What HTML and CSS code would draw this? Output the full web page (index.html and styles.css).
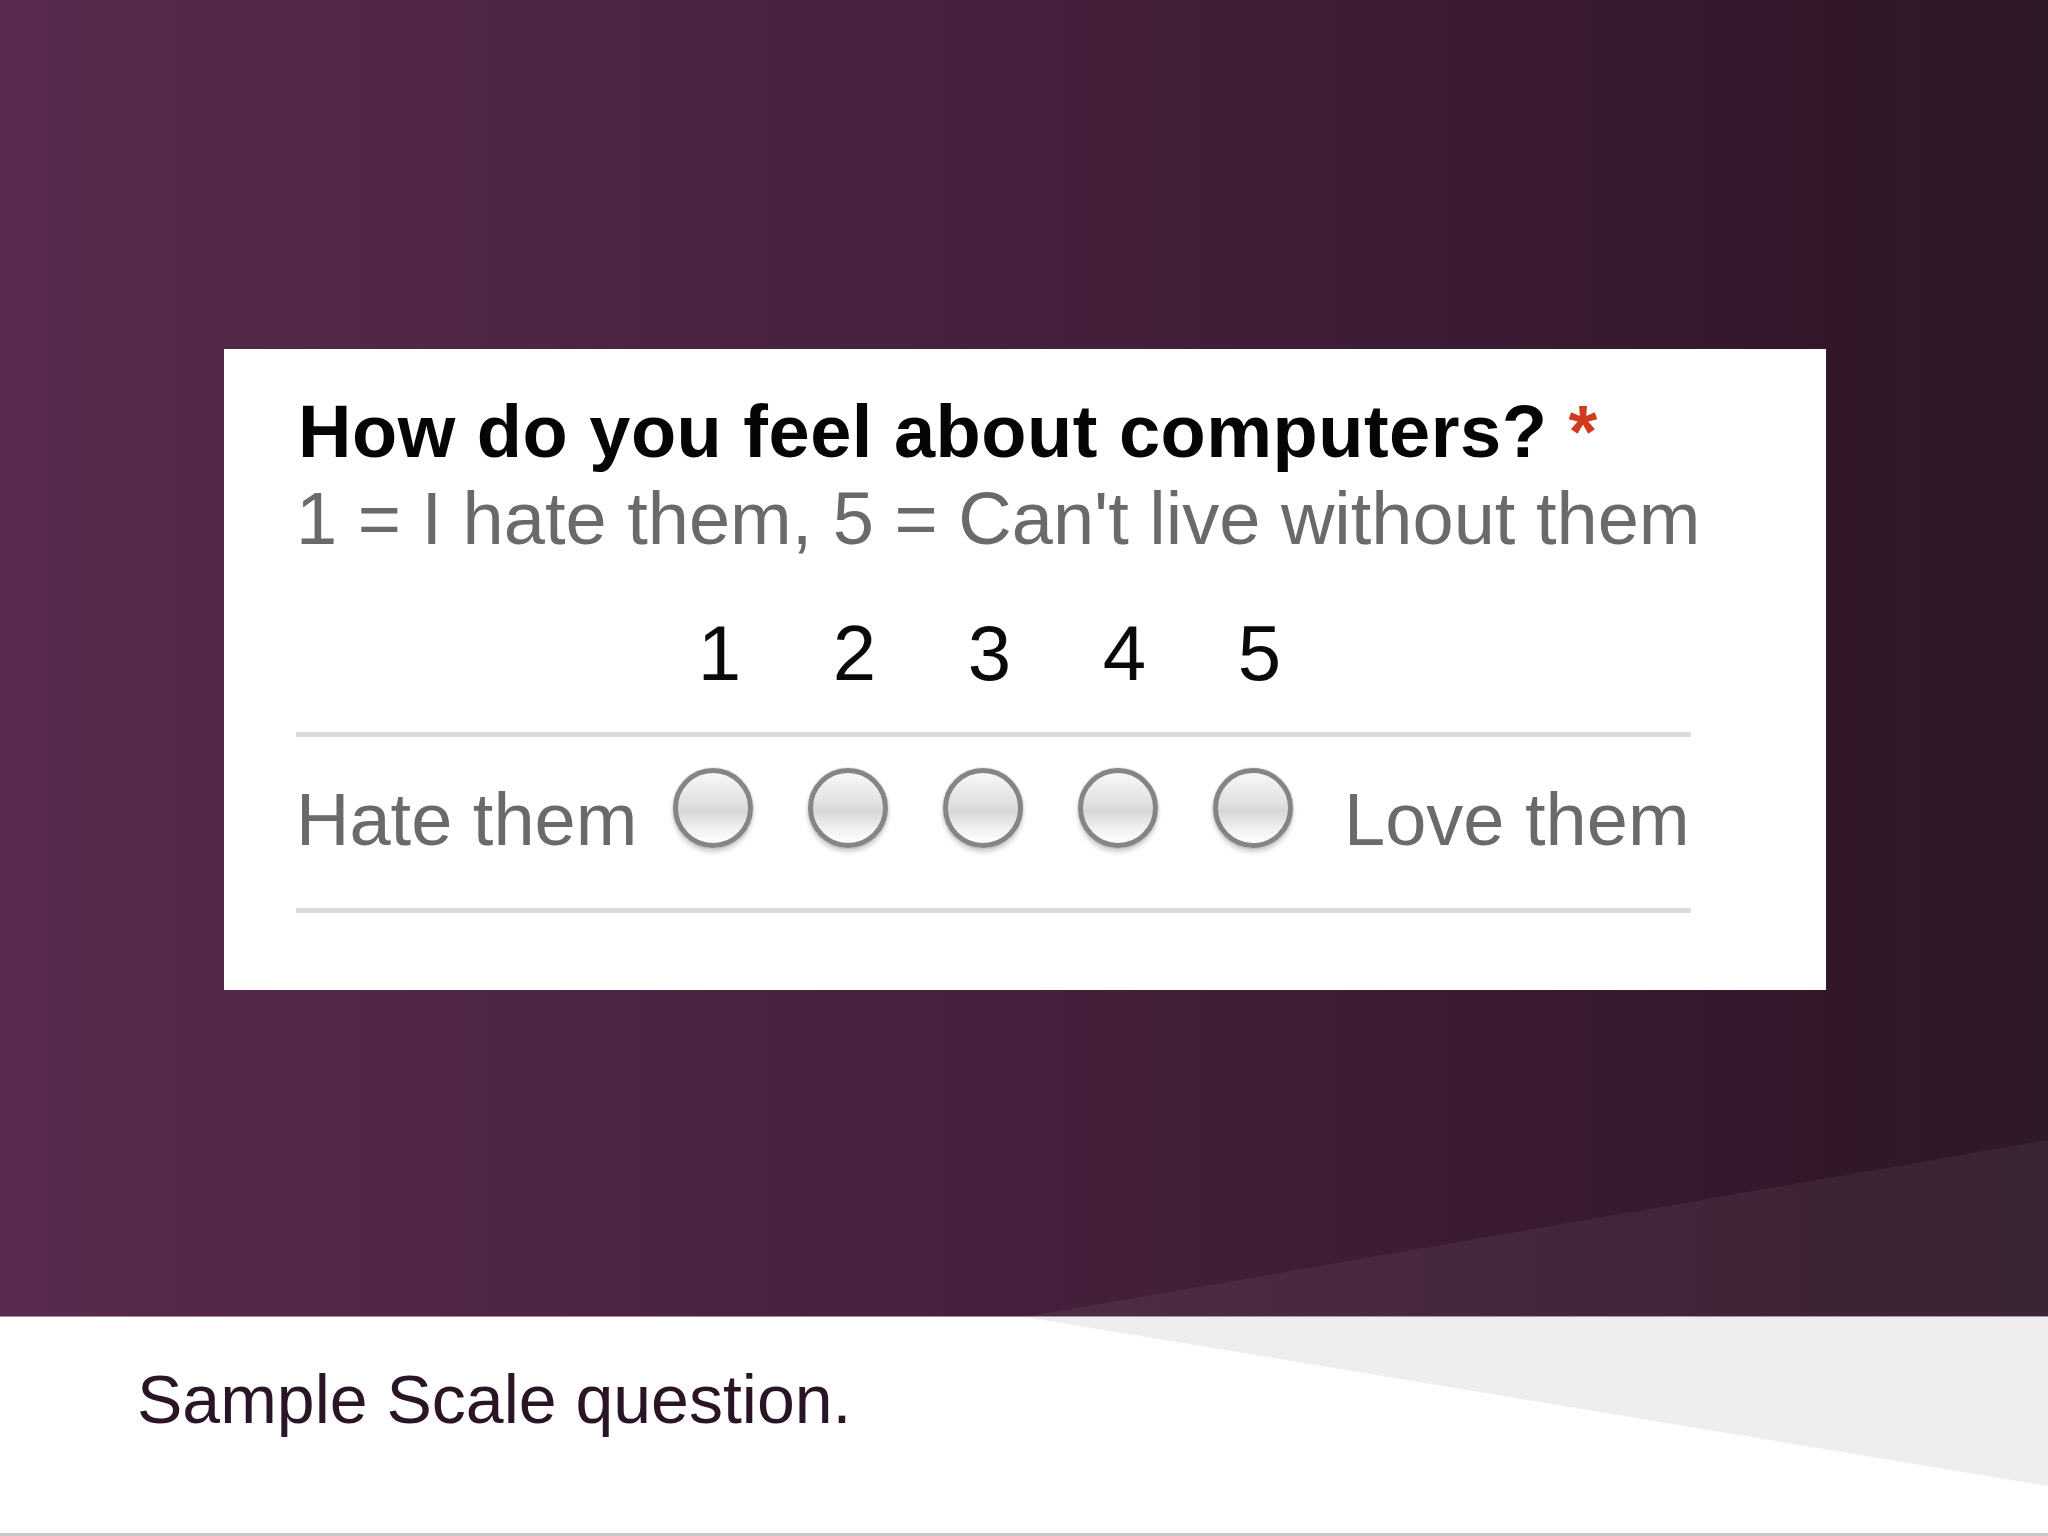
FILE: index.html
```html
<!DOCTYPE html>
<html lang="en">
<head>
<meta charset="utf-8">
<title>Sample Scale question</title>
<link rel="stylesheet" href="styles.css">
</head>
<body>
<div class="slide">
  <section class="stage">
    <div class="card">
      <h1 class="q-title">How do you feel about computers? <span class="req">*</span></h1>
      <p class="q-help">1 = I hate them, 5 = Can't live without them</p>
      <div class="scale-head">
        <span></span>
        <span class="num">1</span>
        <span class="num">2</span>
        <span class="num">3</span>
        <span class="num">4</span>
        <span class="num">5</span>
        <span></span>
      </div>
      <div class="rule"></div>
      <div class="scale-row">
        <span class="end-label">Hate them</span>
        <span class="cell"><span class="radio"></span></span>
        <span class="cell"><span class="radio"></span></span>
        <span class="cell"><span class="radio"></span></span>
        <span class="cell"><span class="radio"></span></span>
        <span class="cell"><span class="radio"></span></span>
        <span class="end-label end-right">Love them</span>
      </div>
      <div class="rule"></div>
    </div>
  </section>
  <footer class="caption">Sample Scale question.</footer>
  <svg class="deco" width="2048" height="1536" viewBox="0 0 2048 1536" aria-hidden="true">
    <polygon points="1025,1317 2048,1140 2048,1317" fill="rgba(255,255,255,0.055)"/>
    <polygon points="1025,1317 2048,1317 2048,1486" fill="#efedf0"/>
  </svg>
</div>
</body>
</html>
```

FILE: styles.css
```css
html, body {
  margin: 0;
  padding: 0;
  background: #ffffff;
}

.slide {
  position: relative;
  width: 2048px;
  height: 1536px;
  overflow: hidden;
  font-family: "Liberation Sans", Arial, sans-serif;
}

.stage {
  box-sizing: border-box;
  height: 1317px;
  padding: 349px 0 0 224px;
  background: linear-gradient(to right, #592a4d 0%, #4f2545 25%, #45203c 50%, #3b1b33 72%, #32172b 90%, #2e1929 100%);
  border-bottom: 1px solid #a88aa0;
}

.card {
  box-sizing: border-box;
  width: 1602px;
  height: 641px;
  background: #ffffff;
  padding: 39px 135px 0 72px;
}

.q-title {
  margin: 0 0 0 2px;
  font-size: 74px;
  line-height: 87px;
  font-weight: bold;
  letter-spacing: 0.5px;
  color: #050505;
  white-space: nowrap;
}

.req {
  color: #d03a1f;
}

.q-help {
  margin: 0;
  font-size: 74px;
  line-height: 87px;
  color: #6a6a6a;
  white-space: nowrap;
}

.scale-head,
.scale-row {
  display: grid;
  grid-template-columns: 349px repeat(5, 135px) 1fr;
}

.scale-head {
  margin-top: 46px;
  height: 90px;
}

.num {
  font-size: 78px;
  line-height: 90px;
  color: #0a0a0a;
  text-align: center;
  padding-left: 14px;
}

.rule {
  height: 5px;
  background: #dadada;
}

.scale-head + .rule {
  margin-top: 34px;
}

.scale-row {
  height: 171px;
}

.end-label {
  font-size: 74px;
  line-height: 87px;
  color: #6a6a6a;
  margin-top: 39px;
  white-space: nowrap;
}

.end-right {
  padding-left: 24px;
}

.cell {
  display: flex;
  justify-content: center;
  padding-top: 31px;
}

.radio {
  box-sizing: border-box;
  width: 80px;
  height: 80px;
  border-radius: 50%;
  border: 5px solid #858585;
  background: linear-gradient(to bottom, #f8f8f8 0%, #e2e2e2 40%, #d8d8d8 55%, #efefef 78%, #ffffff 100%);
  box-shadow: 0 0 2px rgba(0, 0, 0, 0.25), 0 4px 5px rgba(0, 0, 0, 0.2);
}

.caption {
  box-sizing: border-box;
  height: 219px;
  padding: 42px 0 0 137px;
  font-size: 68px;
  line-height: 80px;
  color: #2a1525;
  border-bottom: 3px solid #cbc7cb;
}

.deco {
  position: absolute;
  left: 0;
  top: 0;
  pointer-events: none;
}
```
